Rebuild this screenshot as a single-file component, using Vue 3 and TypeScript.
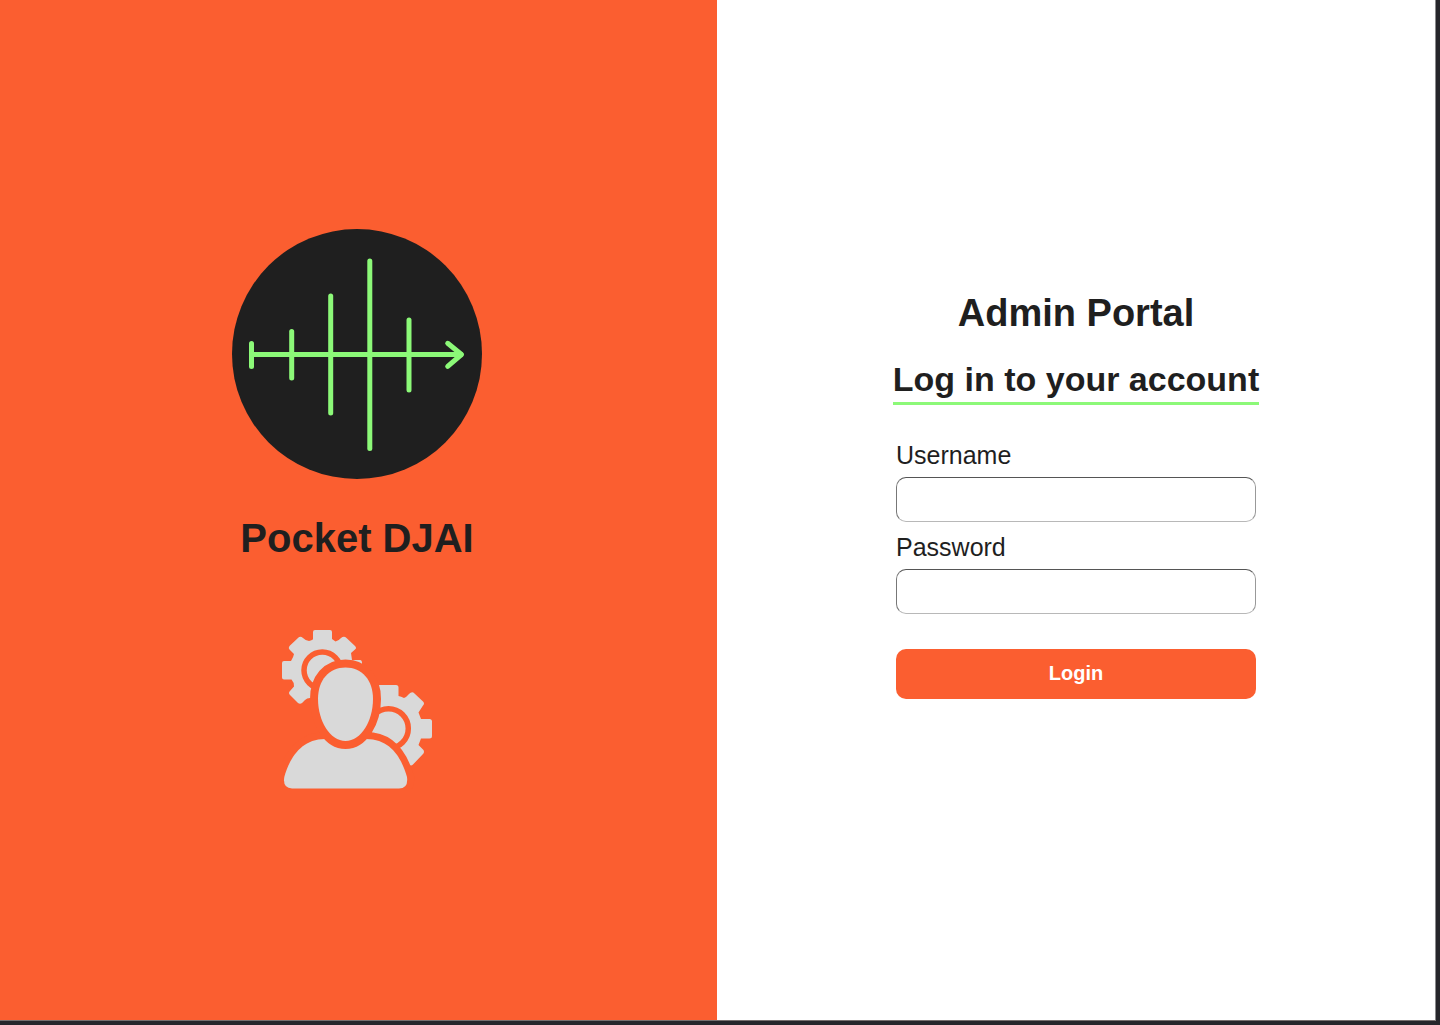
<script setup lang="ts">
import { ref } from 'vue'

const username = ref<string>('')
const password = ref<string>('')
</script>

<template>
  <div class="window">
    <main class="page">
      <section class="brand">
        <svg class="logo" viewBox="0 0 250 250" aria-hidden="true">
          <circle cx="125" cy="125" r="125" fill="#1f1f1f" />
          <g fill="none" stroke="#8cf978" stroke-width="5" stroke-linecap="round" stroke-linejoin="round">
            <path d="M19.5 125.5H229" />
            <path d="M19.5 114.5V137.5" />
            <path d="M59.7 102.500V149" />
            <path d="M98.700 67V184" />
            <path d="M137.800 32V219.500" />
            <path d="M177 91V161" />
            <path d="M215.700 114.300L229.500 125.500L215.700 137.300" />
          </g>
        </svg>
        <h1 class="brand-name">Pocket DJAI</h1>
        <svg class="admin-icon" viewBox="0 0 150 160" aria-hidden="true">
          <g fill="#d9d9d9">
            <path d="M33 0H48Q50 0 50 2V9L53.500 11.500Q57 10.500 59 8Q62 5.500 64.500 8L73 16Q75 18 73 19.500L69 23L70 30H78Q80 30 80 33V48L40 70L28 68Q25 68 23 70L20 73Q18 74.500 16 73L8 65Q6 63 8 61L12 56.500Q12 52 9.500 49.500H2Q0 49.500 0 47.500V33Q0 31 2 31H9Q11.500 27 12 24L7.500 19.500Q6 18 7.500 16L16.500 7.500Q18.500 6 21 8Q24 11 27 11Q31 10 31 9V2Q31 0 33 0Z" />
            <path d="M90 55H114Q116.500 55 116.500 57.500V66Q119 66.500 122 68Q124.500 67 127 64Q130 61 132.500 63.500L141 71.500Q143 73.500 141 75.500L136.500 82.500L139 89H147.500Q150 89 150 91.500V106Q150 108.500 147.500 108.500H139L136.500 115L141 119.500Q143 121.500 141 124L131 134.500Q129 136.500 127 134.500L105 140L80 100Z" />
          </g>
          <g fill="none" stroke="#fb5e30" stroke-width="5.500">
            <circle cx="40.300" cy="40.300" r="18.300" />
            <circle cx="106.500" cy="98.500" r="19.800" />
          </g>
          <g fill="#d9d9d9" stroke="#fb5e30" stroke-linejoin="round" paint-order="stroke">
            <path stroke-width="14" d="M43 109C18 109 7 130 2.300 147Q.5 158.500 10 158.500H117Q126.500 158.500 125 147C120 130 110 109 84 109Z" />
            <path stroke-width="16" d="M63.500 37.500C80 37.500 91 50 91 69C91 91 79 111 63.500 111C48 111 36 91 36 69C36 50 47 37.500 63.500 37.500Z" />
          </g>
        </svg>
      </section>

      <section class="login">
        <h2 class="portal">Admin Portal</h2>
        <h3 class="subtitle">Log in to your account</h3>
        <form class="form" @submit.prevent>
          <label for="username">Username</label>
          <input id="username" v-model="username" type="text" autocomplete="username" />
          <label for="password">Password</label>
          <input id="password" v-model="password" type="password" autocomplete="current-password" />
          <button type="submit">Login</button>
        </form>
      </section>
    </main>
  </div>
</template>

<style>
body {
  margin: 0;
}
</style>

<style scoped>
.window {
  box-sizing: border-box;
  display: flex;
  min-height: 100vh;
  padding: 0 4px 4px 0;
  background: #26262b;
  color: #1f1f1f;
  font-family: "Liberation Sans", Arial, sans-serif;
}

.page {
  flex: 1;
  display: grid;
  grid-template-columns: 717fr 718fr;
  border-right: 1px solid #8a8a8c;
  border-bottom: 1px solid #77706f;
  background: #fff;
}

.brand,
.login {
  display: flex;
  flex-direction: column;
  align-items: center;
  justify-content: center;
}

.brand {
  padding: 0 3px 1px 0;
  background: #fb5e30;
}

.logo {
  width: 250px;
  height: 250px;
}

.brand-name {
  margin: 36px 0 69px;
  font-size: 40px;
  line-height: 46px;
}

.admin-icon {
  width: 150px;
  height: 160px;
}

.login {
  padding-bottom: 31px;
}

.portal {
  margin: 0 0 24px;
  font-size: 38px;
  line-height: 44px;
}

.subtitle {
  margin: 0 0 36px;
  padding-bottom: 3px;
  border-bottom: 3px solid #8cf978;
  font-size: 34px;
  line-height: 40px;
}

.form {
  display: flex;
  flex-direction: column;
  width: 360px;
}

.form label {
  margin-bottom: 8px;
  font-size: 25px;
  line-height: 28px;
}

.form input {
  box-sizing: border-box;
  height: 45px;
  margin: 0 0 11px;
  padding: 0 12px;
  border: 1px solid;
  border-color: #555 #999 #b8b8b8 #777;
  border-radius: 10px;
  background: #fff;
  color: inherit;
  font: inherit;
  font-size: 20px;
}

.form button {
  height: 50px;
  margin-top: 24px;
  padding: 0;
  border: 0;
  border-radius: 10px;
  background: #fb5e30;
  color: #fff;
  font: inherit;
  font-size: 20px;
  font-weight: 700;
  cursor: pointer;
}
</style>
